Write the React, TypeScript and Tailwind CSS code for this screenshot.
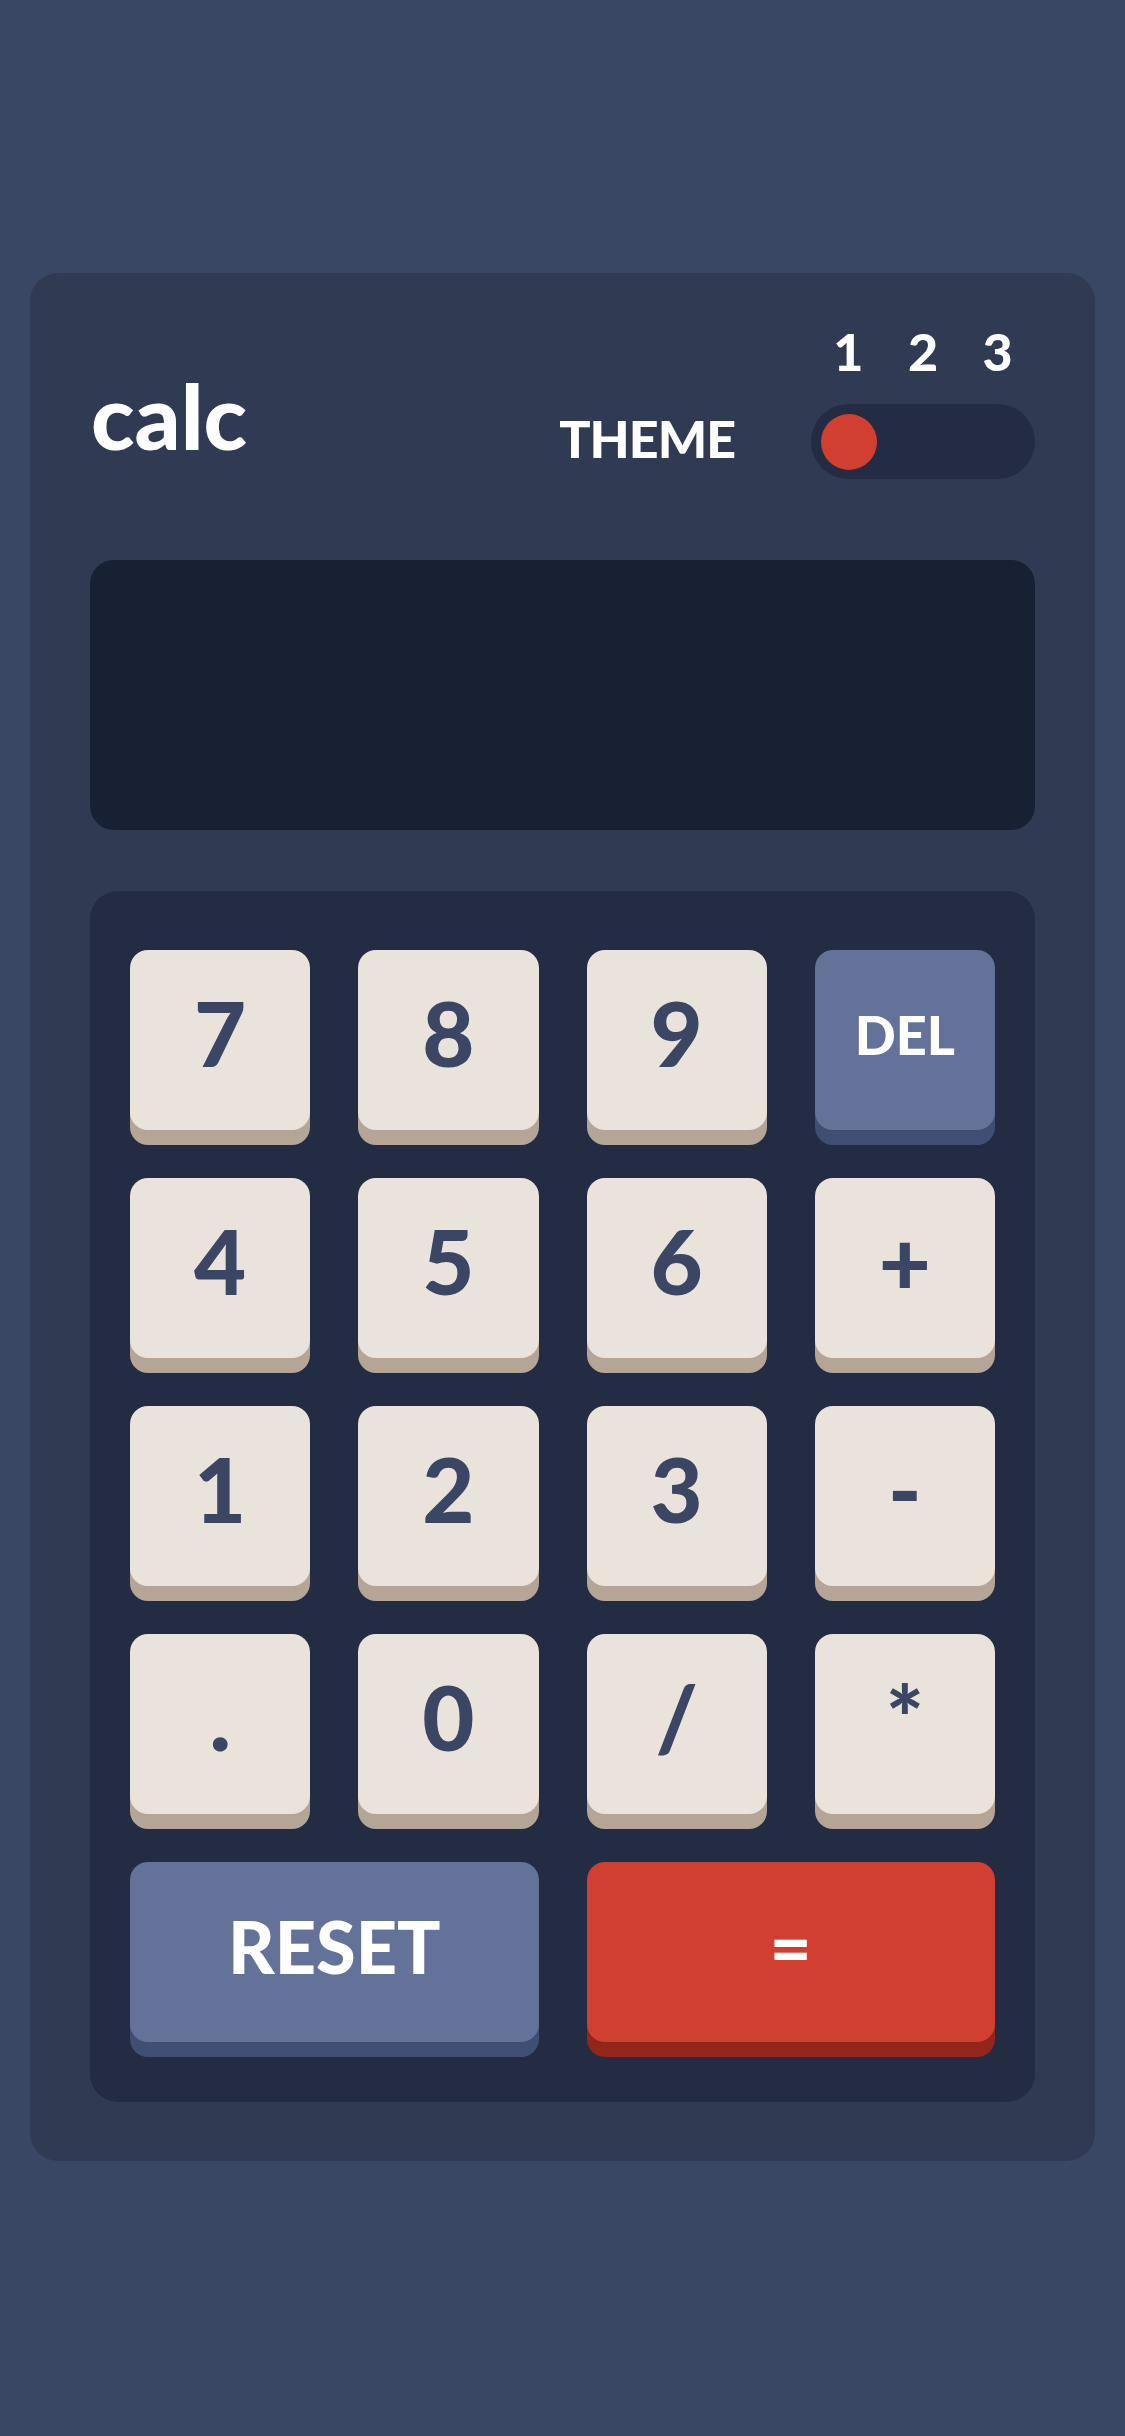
import React from 'react';

type Key = {
  label: string;
  kind?: 'num' | 'del' | 'reset' | 'equal';
  wide?: boolean;
};

const keys: Key[] = [
  { label: '7' }, { label: '8' }, { label: '9' }, { label: 'DEL', kind: 'del' },
  { label: '4' }, { label: '5' }, { label: '6' }, { label: '+' },
  { label: '1' }, { label: '2' }, { label: '3' }, { label: '-' },
  { label: '.' }, { label: '0' }, { label: '/' }, { label: '*' },
  { label: 'RESET', kind: 'reset', wide: true },
  { label: '=', kind: 'equal', wide: true },
];

function CalcKey({ k }: { k: Key }) {
  const kind = k.kind ?? 'num';
  let cls =
    'bg-[#eae3dc] text-[#3b4664] shadow-[0_15px_0_#b4a597] text-[90px] pb-[16px]';
  if (kind === 'del') cls = 'bg-[#647198] text-white shadow-[0_15px_0_#414e73] text-[54px] pb-[10px]';
  if (kind === 'reset') cls = 'bg-[#647198] text-white shadow-[0_15px_0_#414e73] text-[72px] pb-[12px]';
  if (kind === 'equal') cls = 'bg-[#d03f2f] text-white shadow-[0_15px_0_#93261a] text-[72px] pb-[12px]';

  return (
    <button
      className={`h-[180px] rounded-[18px] flex items-center justify-center font-black leading-none ${cls} ${
        k.wide ? 'col-span-2' : ''
      }`}
    >
      {k.label}
    </button>
  );
}

export default function App() {
  return (
    <div className="min-h-[2436px] w-full bg-[#3a4764] pt-[273px] font-['Lato',sans-serif] select-none">
      <div className="mx-[30px] rounded-[28px] bg-[#313a53] px-[60px] pt-[52px] pb-[59px]">
        {/* Header */}
        <div className="flex items-end justify-between">
          <h1 className="mb-[19px] ml-[1px] text-[90px] font-black leading-none text-white">calc</h1>
          <div className="flex items-end gap-[76px]">
            <span className="mb-[15px] text-[52px] font-black leading-none tracking-[-1px] text-white">THEME</span>
            <div className="flex flex-col">
              <div className="grid w-[224px] grid-cols-3 text-center text-[52px] font-black leading-none text-white">
                <span>1</span>
                <span>2</span>
                <span>3</span>
              </div>
              <div className="mt-[27px] flex h-[75px] w-[224px] items-center rounded-full bg-[#232c43] px-[10px]">
                <div className="h-[56px] w-[56px] rounded-full bg-[#d03f2f]" />
              </div>
            </div>
          </div>
        </div>

        {/* Screen */}
        <div className="mt-[81px] h-[270px] rounded-[24px] bg-[#182034]" />

        {/* Keypad */}
        <div className="mt-[61px] grid grid-cols-4 gap-[48px] rounded-[28px] bg-[#232c43] px-[40px] pt-[59px] pb-[60px]">
          {keys.map((k) => (
            <CalcKey key={k.label} k={k} />
          ))}
        </div>
      </div>
    </div>
  );
}
